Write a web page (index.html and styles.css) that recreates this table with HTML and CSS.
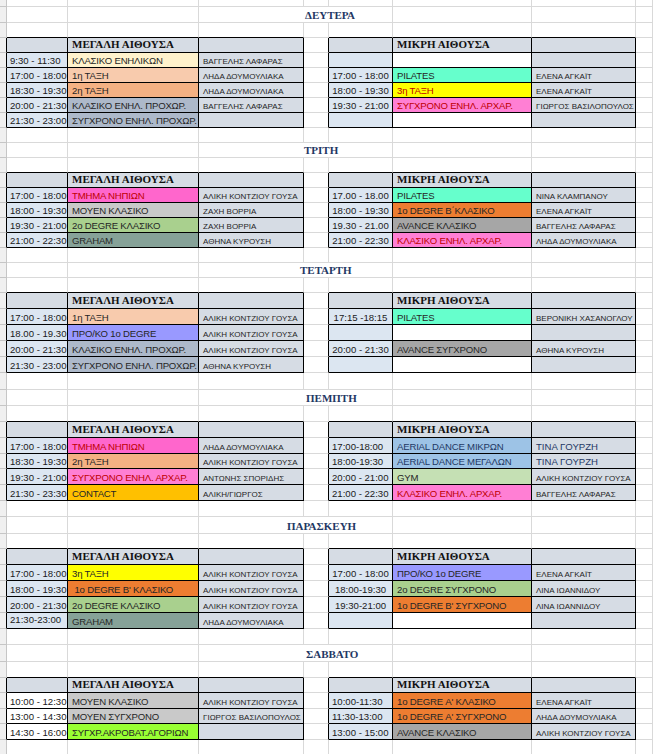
FILE: index.html
```html
<!DOCTYPE html>
<html lang="el">
<head>
<meta charset="utf-8">
<title>Πρόγραμμα</title>
<link rel="stylesheet" href="styles.css">
</head>
<body>
<table class="sheet">
<colgroup>
<col class="w-rh"><col class="w-a"><col class="w-b"><col class="w-c"><col class="w-d"><col class="w-e"><col class="w-f"><col class="w-g"><col class="w-h">
</colgroup>
<tbody>
<tr class="top"><td class="rh"></td><td></td><td></td><td></td><td></td><td></td><td></td><td></td><td></td></tr>

<!-- ΔΕΥΤΕΡΑ -->
<tr><td class="rh"></td><td></td><td></td><td colspan="3" class="ttl t1">ΔΕΥΤΕΡΑ</td><td></td><td></td><td></td></tr>
<tr class="s pre"><td class="rh"></td><td class="k"></td><td class="k"></td><td class="k"></td><td></td><td class="k"></td><td class="k"></td><td class="k"></td><td></td></tr>
<tr class="s tb"><td class="rh"></td><td class="hd"></td><td class="hd">ΜΕΓΑΛΗ ΑΙΘΟΥΣΑ</td><td class="hd"></td><td class="gap"></td><td class="hd"></td><td class="hd">ΜΙΚΡΗ ΑΙΘΟΥΣΑ</td><td class="hd"></td><td></td></tr>
<tr class="s tb"><td class="rh"></td><td class="tm">9:30 - 11:30</td><td class="cl c-cream">ΚΛΑΣΙΚΟ ΕΝΗΛΙΚΩΝ</td><td class="tc">ΒΑΓΓΕΛΗΣ ΛΑΦΑΡΑΣ</td><td class="gap"></td><td class="tm"></td><td class="cl"></td><td class="tc"></td><td></td></tr>
<tr class="s tb"><td class="rh"></td><td class="tm">17:00 - 18:00</td><td class="cl c-peach">1η ΤΑΞΗ</td><td class="tc">ΛΗΔΑ ΔΟΥΜΟΥΛΙΑΚΑ</td><td class="gap"></td><td class="tm ctr">17:00 - 18:00</td><td class="cl c-mint">PILATES</td><td class="tc">ΕΛΕΝΑ ΑΓΚΑΪΤ</td><td></td></tr>
<tr class="s tb"><td class="rh"></td><td class="tm">18:30 - 19:30</td><td class="cl c-apricot">2η ΤΑΞΗ</td><td class="tc">ΛΗΔΑ ΔΟΥΜΟΥΛΙΑΚΑ</td><td class="gap"></td><td class="tm ctr">18:00 - 19:30</td><td class="cl c-yellow red">3η ΤΑΞΗ</td><td class="tc">ΕΛΕΝΑ ΑΓΚΑΪΤ</td><td></td></tr>
<tr class="s tb"><td class="rh"></td><td class="tm">20:00 - 21:30</td><td class="cl c-slate">ΚΛΑΣΙΚΟ ΕΝΗΛ. ΠΡΟΧΩΡ.</td><td class="tc">ΒΑΓΓΕΛΗΣ ΛΑΦΑΡΑΣ</td><td class="gap"></td><td class="tm ctr">19:30 - 21:00</td><td class="cl c-pink red">ΣΥΓΧΡΟΝΟ ΕΝΗΛ. ΑΡΧΑΡ.</td><td class="tc">ΓΙΩΡΓΟΣ ΒΑΣΙΛΟΠΟΥΛΟΣ</td><td></td></tr>
<tr class="s tb"><td class="rh"></td><td class="tm">21:30 - 23:00</td><td class="cl c-slate">ΣΥΓΧΡΟΝΟ ΕΝΗΛ. ΠΡΟΧΩΡ.</td><td class="tc"></td><td class="gap"></td><td class="tm"></td><td class="cl"></td><td class="tc"></td><td></td></tr>

<!-- ΤΡΙΤΗ -->
<tr class="s"><td class="rh"></td><td></td><td></td><td></td><td></td><td></td><td></td><td></td><td></td></tr>
<tr class="s"><td class="rh"></td><td></td><td></td><td colspan="3" class="ttl t2">ΤΡΙΤΗ</td><td></td><td></td><td></td></tr>
<tr class="s pre"><td class="rh"></td><td class="k"></td><td class="k"></td><td class="k"></td><td></td><td class="k"></td><td class="k"></td><td class="k"></td><td></td></tr>
<tr class="s tb"><td class="rh"></td><td class="hd"></td><td class="hd">ΜΕΓΑΛΗ ΑΙΘΟΥΣΑ</td><td class="hd"></td><td class="gap"></td><td class="hd"></td><td class="hd">ΜΙΚΡΗ ΑΙΘΟΥΣΑ</td><td class="hd"></td><td></td></tr>
<tr class="s tb"><td class="rh"></td><td class="tm">17:00 - 18:00</td><td class="cl c-magenta red">ΤΜΗΜΑ ΝΗΠΙΩΝ</td><td class="tc">ΑΛΙΚΗ ΚΟΝΤΖΙΟΥ ΓΟΥΣΑ</td><td class="gap"></td><td class="tm ctr">17.00 - 18.00</td><td class="cl c-mint">PILATES</td><td class="tc">ΝΙΝΑ ΚΛΑΜΠΑΝΟΥ</td><td></td></tr>
<tr class="s tb"><td class="rh"></td><td class="tm">18:00 - 19:30</td><td class="cl c-silver">ΜΟΥΕΝ ΚΛΑΣΙΚΟ</td><td class="tc">ΖΑΧΗ ΒΟΡΡΙΑ</td><td class="gap"></td><td class="tm ctr">18:00 - 19:30</td><td class="cl c-orange">1ο DEGRE Β΄ΚΛΑΣΙΚΟ</td><td class="tc">ΕΛΕΝΑ ΑΓΚΑΪΤ</td><td></td></tr>
<tr class="s tb"><td class="rh"></td><td class="tm">19:30 - 21:00</td><td class="cl c-green">2ο DEGRE ΚΛΑΣΙΚΟ</td><td class="tc">ΖΑΧΗ ΒΟΡΡΙΑ</td><td class="gap"></td><td class="tm ctr">19.30 - 21.00</td><td class="cl c-gray">AVANCE ΚΛΑΣΙΚΟ</td><td class="tc">ΒΑΓΓΕΛΗΣ ΛΑΦΑΡΑΣ</td><td></td></tr>
<tr class="s tb"><td class="rh"></td><td class="tm">21:00 - 22:30</td><td class="cl c-teal">GRAHAM</td><td class="tc">ΑΘΗΝΑ ΚΥΡΟΥΣΗ</td><td class="gap"></td><td class="tm ctr">21:00 - 22:30</td><td class="cl c-pink red">ΚΛΑΣΙΚΟ ΕΝΗΛ. ΑΡΧΑΡ.</td><td class="tc">ΛΗΔΑ ΔΟΥΜΟΥΛΙΑΚΑ</td><td></td></tr>

<!-- ΤΕΤΑΡΤΗ -->
<tr class="s"><td class="rh"></td><td></td><td></td><td></td><td></td><td></td><td></td><td></td><td></td></tr>
<tr class="s"><td class="rh"></td><td></td><td></td><td colspan="3" class="ttl t3">ΤΕΤΑΡΤΗ</td><td></td><td></td><td></td></tr>
<tr class="s pre"><td class="rh"></td><td class="k"></td><td class="k"></td><td class="k"></td><td></td><td class="k"></td><td class="k"></td><td class="k"></td><td></td></tr>
<tr class="tb"><td class="rh"></td><td class="hd"></td><td class="hd">ΜΕΓΑΛΗ ΑΙΘΟΥΣΑ</td><td class="hd"></td><td class="gap"></td><td class="hd"></td><td class="hd">ΜΙΚΡΗ ΑΙΘΟΥΣΑ</td><td class="hd"></td><td></td></tr>
<tr class="tb"><td class="rh"></td><td class="tm">17:00 - 18:00</td><td class="cl c-peach">1η ΤΑΞΗ</td><td class="tc">ΑΛΙΚΗ ΚΟΝΤΖΙΟΥ ΓΟΥΣΑ</td><td class="gap"></td><td class="tm ctr">17:15 -18:15</td><td class="cl c-mint">PILATES</td><td class="tc">ΒΕΡΟΝΙΚΗ ΧΑΣΑΝΟΓΛΟΥ</td><td></td></tr>
<tr class="tb"><td class="rh"></td><td class="tm">18.00 - 19.30</td><td class="cl c-violet">ΠΡΟ/ΚΟ 1ο DEGRE</td><td class="tc">ΑΛΙΚΗ ΚΟΝΤΖΙΟΥ ΓΟΥΣΑ</td><td class="gap"></td><td class="tm"></td><td class="cl"></td><td class="tc"></td><td></td></tr>
<tr class="tb"><td class="rh"></td><td class="tm">20:00 - 21:30</td><td class="cl c-slate">ΚΛΑΣΙΚΟ ΕΝΗΛ. ΠΡΟΧΩΡ.</td><td class="tc">ΑΛΙΚΗ ΚΟΝΤΖΙΟΥ ΓΟΥΣΑ</td><td class="gap"></td><td class="tm ctr">20:00 - 21:30</td><td class="cl c-gray">AVANCE ΣΥΓΧΡΟΝΟ</td><td class="tc">ΑΘΗΝΑ ΚΥΡΟΥΣΗ</td><td></td></tr>
<tr class="tb"><td class="rh"></td><td class="tm">21:30 - 23:00</td><td class="cl c-slate">ΣΥΓΧΡΟΝΟ ΕΝΗΛ. ΠΡΟΧΩΡ.</td><td class="tc">ΑΘΗΝΑ ΚΥΡΟΥΣΗ</td><td class="gap"></td><td class="tm"></td><td class="cl"></td><td class="tc"></td><td></td></tr>

<!-- ΠΕΜΠΤΗ -->
<tr class="l"><td class="rh"></td><td></td><td></td><td></td><td></td><td></td><td></td><td></td><td></td></tr>
<tr><td class="rh"></td><td></td><td></td><td colspan="3" class="ttl t4">ΠΕΜΠΤΗ</td><td></td><td></td><td></td></tr>
<tr class="pre"><td class="rh"></td><td class="k"></td><td class="k"></td><td class="k"></td><td></td><td class="k"></td><td class="k"></td><td class="k"></td><td></td></tr>
<tr class="tb"><td class="rh"></td><td class="hd"></td><td class="hd">ΜΕΓΑΛΗ ΑΙΘΟΥΣΑ</td><td class="hd"></td><td class="gap"></td><td class="hd"></td><td class="hd">ΜΙΚΡΗ ΑΙΘΟΥΣΑ</td><td class="hd"></td><td></td></tr>
<tr class="tb"><td class="rh"></td><td class="tm">17:00 - 18:00</td><td class="cl c-magenta red">ΤΜΗΜΑ ΝΗΠΙΩΝ</td><td class="tc">ΛΗΔΑ ΔΟΥΜΟΥΛΙΑΚΑ</td><td class="gap"></td><td class="tm">17:00-18:00</td><td class="cl c-sky navy">AERIAL DANCE ΜΙΚΡΩΝ</td><td class="tc big navy">ΤΙΝΑ ΓΟΥΡΖΗ</td><td></td></tr>
<tr class="s tb"><td class="rh"></td><td class="tm">18:30 - 19:30</td><td class="cl c-apricot">2η ΤΑΞΗ</td><td class="tc">ΑΛΙΚΗ ΚΟΝΤΖΙΟΥ ΓΟΥΣΑ</td><td class="gap"></td><td class="tm">18:00-19:30</td><td class="cl c-sky navy">AERIAL DANCE ΜΕΓΑΛΩΝ</td><td class="tc big navy">ΤΙΝΑ ΓΟΥΡΖΗ</td><td></td></tr>
<tr class="tb"><td class="rh"></td><td class="tm">19:30 - 21:00</td><td class="cl c-pink red">ΣΥΓΧΡΟΝΟ ΕΝΗΛ. ΑΡΧΑΡ.</td><td class="tc">ΑΝΤΩΝΗΣ ΣΠΟΡΙΔΗΣ</td><td class="gap"></td><td class="tm">20:00 - 21:00</td><td class="cl c-lime-soft">GYM</td><td class="tc">ΑΛΙΚΗ ΚΟΝΤΖΙΟΥ ΓΟΥΣΑ</td><td></td></tr>
<tr class="tb"><td class="rh"></td><td class="tm">21:30 - 23:30</td><td class="cl c-amber">CONTACT</td><td class="tc">ΑΛΙΚΗ/ΓΙΩΡΓΟΣ</td><td class="gap"></td><td class="tm">21:00 - 22:30</td><td class="cl c-pink red">ΚΛΑΣΙΚΟ ΕΝΗΛ. ΑΡΧΑΡ.</td><td class="tc">ΒΑΓΓΕΛΗΣ ΛΑΦΑΡΑΣ</td><td></td></tr>

<!-- ΠΑΡΑΣΚΕΥΗ -->
<tr><td class="rh"></td><td></td><td></td><td></td><td></td><td></td><td></td><td></td><td></td></tr>
<tr class="l"><td class="rh"></td><td></td><td></td><td colspan="3" class="ttl t5">ΠΑΡΑΣΚΕΥΗ</td><td></td><td></td><td></td></tr>
<tr class="s pre"><td class="rh"></td><td class="k"></td><td class="k"></td><td class="k"></td><td></td><td class="k"></td><td class="k"></td><td class="k"></td><td></td></tr>
<tr class="tb"><td class="rh"></td><td class="hd"></td><td class="hd">ΜΕΓΑΛΗ ΑΙΘΟΥΣΑ</td><td class="hd"></td><td class="gap"></td><td class="hd"></td><td class="hd">ΜΙΚΡΗ ΑΙΘΟΥΣΑ</td><td class="hd"></td><td></td></tr>
<tr class="tb"><td class="rh"></td><td class="tm">17:00 - 18:00</td><td class="cl c-yellow">3η ΤΑΞΗ</td><td class="tc">ΑΛΙΚΗ ΚΟΝΤΖΙΟΥ ΓΟΥΣΑ</td><td class="gap"></td><td class="tm ctr">17:00 - 18:00</td><td class="cl c-violet">ΠΡΟ/ΚΟ 1ο DEGRE</td><td class="tc">ΕΛΕΝΑ ΑΓΚΑΪΤ</td><td></td></tr>
<tr class="tb"><td class="rh"></td><td class="tm">18:00 - 19:30</td><td class="cl c-orange">&nbsp;1ο DEGRE Β' ΚΛΑΣΙΚΟ</td><td class="tc">ΑΛΙΚΗ ΚΟΝΤΖΙΟΥ ΓΟΥΣΑ</td><td class="gap"></td><td class="tm ctr">18:00-19:30</td><td class="cl c-green">2ο DEGRE ΣΥΓΧΡΟΝΟ</td><td class="tc">ΛΙΝΑ ΙΩΑΝΝΙΔΟΥ</td><td></td></tr>
<tr class="tb"><td class="rh"></td><td class="tm">20:00 - 21:30</td><td class="cl c-green">2ο DEGRE ΚΛΑΣΙΚΟ</td><td class="tc">ΑΛΙΚΗ ΚΟΝΤΖΙΟΥ ΓΟΥΣΑ</td><td class="gap"></td><td class="tm ctr">19:30-21:00</td><td class="cl c-orange">1ο DEGRE Β' ΣΥΓΧΡΟΝΟ</td><td class="tc">ΛΙΝΑ ΙΩΑΝΝΙΔΟΥ</td><td></td></tr>
<tr class="tb"><td class="rh"></td><td class="tm raise">21:30-23:00</td><td class="cl c-teal">GRAHAM</td><td class="tc">ΛΗΔΑ ΔΟΥΜΟΥΛΙΑΚΑ</td><td class="gap"></td><td class="tm"></td><td class="cl"></td><td class="tc"></td><td></td></tr>

<!-- ΣΑΒΒΑΤΟ -->
<tr><td class="rh"></td><td></td><td></td><td></td><td></td><td></td><td></td><td></td><td></td></tr>
<tr class="l"><td class="rh"></td><td></td><td></td><td colspan="3" class="ttl t6">ΣΑΒΒΑΤΟ</td><td></td><td></td><td></td></tr>
<tr class="pre"><td class="rh"></td><td class="k"></td><td class="k"></td><td class="k"></td><td></td><td class="k"></td><td class="k"></td><td class="k"></td><td></td></tr>
<tr class="s tb"><td class="rh"></td><td class="hd"></td><td class="hd">ΜΕΓΑΛΗ ΑΙΘΟΥΣΑ</td><td class="hd"></td><td class="gap"></td><td class="hd"></td><td class="hd">ΜΙΚΡΗ ΑΙΘΟΥΣΑ</td><td class="hd"></td><td></td></tr>
<tr class="tb"><td class="rh"></td><td class="tm plain">10:00 - 12:30</td><td class="cl c-silver">ΜΟΥΕΝ ΚΛΑΣΙΚΟ</td><td class="tc">ΑΛΙΚΗ ΚΟΝΤΖΙΟΥ ΓΟΥΣΑ</td><td class="gap"></td><td class="tm">10:00-11:30</td><td class="cl c-orange">1ο DEGRE Α' ΚΛΑΣΙΚΟ</td><td class="tc">ΕΛΕΝΑ ΑΓΚΑΪΤ</td><td></td></tr>
<tr class="s tb"><td class="rh"></td><td class="tm plain">13:00 - 14:30</td><td class="cl c-silver">ΜΟΥΕΝ ΣΥΓΧΡΟΝΟ</td><td class="tc">ΓΙΩΡΓΟΣ ΒΑΣΙΛΟΠΟΥΛΟΣ</td><td class="gap"></td><td class="tm">11:30-13:00</td><td class="cl c-orange">1ο DEGRE Α' ΣΥΓΧΡΟΝΟ</td><td class="tc">ΛΗΔΑ ΔΟΥΜΟΥΛΙΑΚΑ</td><td></td></tr>
<tr class="tb"><td class="rh"></td><td class="tm plain">14:30 - 16:00</td><td class="cl c-lime">ΣΥΓΧΡ.ΑΚΡΟΒΑΤ.ΑΓΟΡΙΩΝ</td><td class="tc"></td><td class="gap"></td><td class="tm">13:00 - 15:00</td><td class="cl c-gray">AVANCE ΚΛΑΣΙΚΟ</td><td class="tc">ΑΛΙΚΗ ΚΟΝΤΖΙΟΥ ΓΟΥΣΑ</td><td></td></tr>
<tr class="s"><td class="rh"></td><td></td><td></td><td></td><td></td><td></td><td></td><td></td><td></td></tr>
</tbody>
</table>
</body>
</html>
```

FILE: styles.css
```css
html, body {
  margin: 0;
  padding: 0;
  background: #ffffff;
}

.sheet {
  border-collapse: separate;
  border-spacing: 0;
  table-layout: fixed;
  width: 653px;
  font-family: "Liberation Sans", Arial, sans-serif;
  font-size: 9.6px;
  color: #1c1c1c;
}

.w-rh { width: 7px; }
.w-a { width: 61px; }
.w-b { width: 131px; }
.w-c { width: 105px; }
.w-d { width: 25px; }
.w-e { width: 64px; }
.w-f { width: 139px; }
.w-g { width: 104px; }
.w-h { width: 17px; }

.sheet tr { height: 16px; }
.sheet tr.s { height: 15px; }
.sheet tr.l { height: 17px; }
.sheet tr.top { height: 7px; }

.sheet td {
  border-right: 1px solid #d9d9d9;
  border-bottom: 1px solid #d9d9d9;
  padding: 0 0 0 3px;
  white-space: nowrap;
  overflow: hidden;
  vertical-align: bottom;
  line-height: 13px;
}

.sheet td.rh {
  padding: 0;
  background: #f0f0f0;
  border-right-color: #c6c6c6;
  border-bottom-color: #c6c6c6;
}

/* table outline neighbours */
.sheet tr.pre td.k { border-bottom-color: #000; }
.sheet tr.tb td.rh,
.sheet tr.tb td.gap { border-right-color: #000; }

/* schedule cells */
.sheet td.hd,
.sheet td.tm,
.sheet td.cl,
.sheet td.tc {
  border-right-color: #000;
  border-bottom-color: #000;
}

.sheet td.hd {
  background: #d6dce4;
  font-family: "Liberation Serif", "Times New Roman", serif;
  font-weight: bold;
  font-size: 11px;
  color: #111;
  padding-bottom: 1px;
  padding-left: 4px;
}

.sheet td.tm {
  background: #dce6f1;
  color: #1a1a1a;
  padding-left: 3px;
}
.sheet td.tm.ctr { text-align: center; padding-left: 0; }
.sheet td.tm.plain { background: #ffffff; }
.sheet td.tm.raise { padding-bottom: 2px; }

.sheet td.cl {
  background: #ffffff;
  padding-left: 4px;
  letter-spacing: -0.2px;
  color: #262626;
}

.sheet td.tc {
  background: #d6dce4;
  font-size: 8px;
  line-height: 11px;
  padding-left: 4px;
  color: #1f1f1f;
}
.sheet td.tc.big {
  font-size: 9.6px;
  line-height: 13px;
}

.red { color: #c00000 !important; }
.navy { color: #1f3864 !important; }

.c-cream { background: #fff2cc !important; }
.c-peach { background: #f8cbad !important; }
.c-apricot { background: #f4b183 !important; }
.c-slate { background: #adb9ca !important; }
.c-mint { background: #66ffcc !important; }
.c-yellow { background: #ffff00 !important; }
.c-pink { background: #ff7fd4 !important; }
.c-magenta { background: #ff66cc !important; }
.c-silver { background: #c9c9c9 !important; }
.c-green { background: #a9d08e !important; }
.c-teal { background: #86a298 !important; }
.c-orange { background: #ed7d31 !important; }
.c-gray { background: #a6a6a6 !important; }
.c-violet { background: #9999ff !important; }
.c-sky { background: #9dc3e6 !important; }
.c-lime-soft { background: #c5e0b4 !important; }
.c-amber { background: #ffc000 !important; }
.c-lime { background: #99ff33 !important; }

.sheet td.ttl {
  font-family: "Liberation Serif", "Times New Roman", serif;
  font-weight: bold;
  font-size: 11px;
  color: #1f3864;
  overflow: visible;
}
.t1 { padding-left: 106px !important; }
.t2 { padding-left: 105px !important; }
.t3 { padding-left: 101px !important; }
.t4 { padding-left: 107px !important; }
.t5 { padding-left: 88px !important; }
.t6 { padding-left: 107px !important; }
```
